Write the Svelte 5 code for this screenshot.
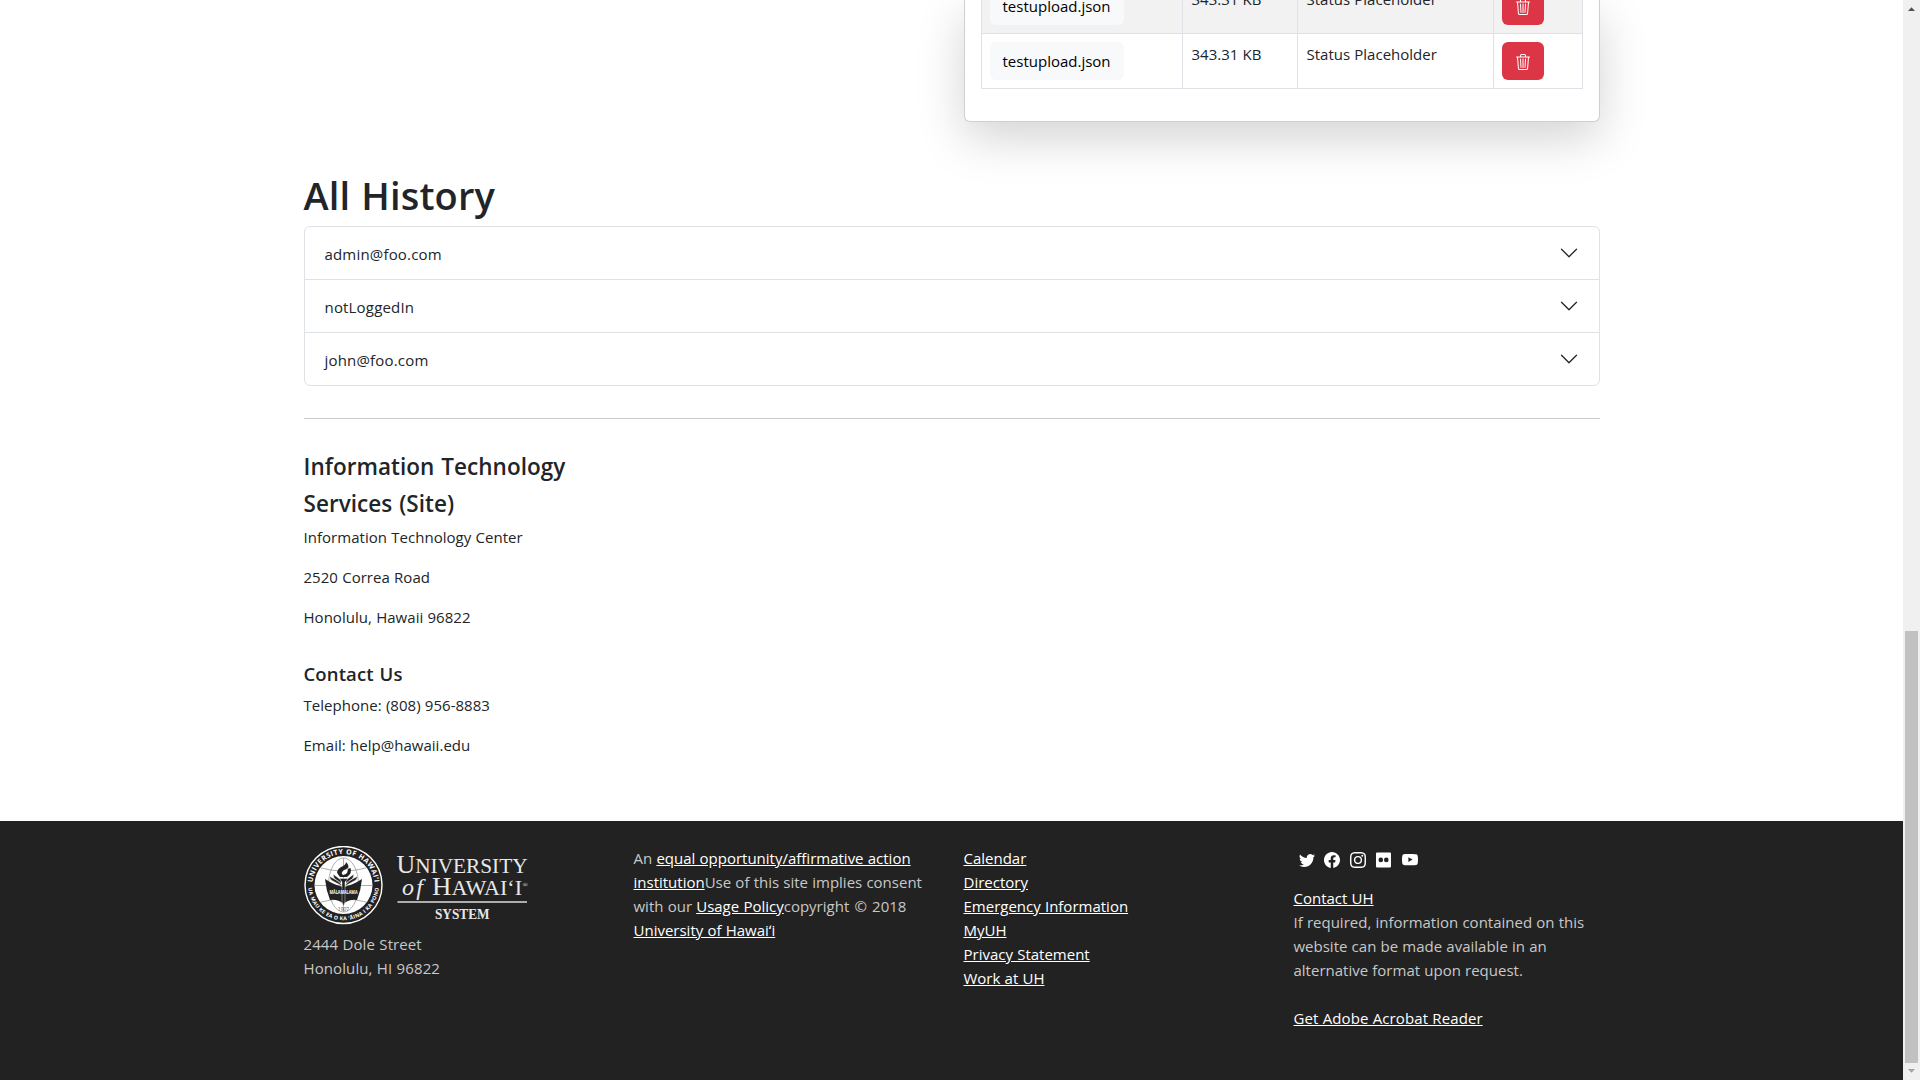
<script>
  const files = [
    { name: 'testupload.json', size: '343.31 KB', status: 'Status Placeholder' },
    { name: 'testupload.json', size: '343.31 KB', status: 'Status Placeholder' },
  ];
  const history = ['admin@foo.com', 'notLoggedIn', 'john@foo.com'];
  const links = ['Calendar', 'Directory', 'Emergency Information', 'MyUH', 'Privacy Statement', 'Work at UH'];
  const social = [
    { name: 'Twitter', d: 'M5.026 15c6.038 0 9.341-5.003 9.341-9.334 0-.14 0-.282-.006-.422A6.685 6.685 0 0 0 16 3.542a6.658 6.658 0 0 1-1.889.518 3.301 3.301 0 0 0 1.447-1.817 6.533 6.533 0 0 1-2.087.793A3.286 3.286 0 0 0 7.875 6.03a9.325 9.325 0 0 1-6.767-3.429 3.289 3.289 0 0 0 1.018 4.382A3.323 3.323 0 0 1 .64 6.575v.045a3.288 3.288 0 0 0 2.632 3.218 3.203 3.203 0 0 1-.865.115 3.23 3.23 0 0 1-.614-.057 3.283 3.283 0 0 0 3.067 2.277A6.588 6.588 0 0 1 .78 13.58a6.32 6.32 0 0 1-.78-.045A9.344 9.344 0 0 0 5.026 15z' },
    { name: 'Facebook', d: 'M16 8.049c0-4.446-3.582-8.05-8-8.05C3.58 0-.002 3.603-.002 8.05c0 4.017 2.926 7.347 6.75 7.951v-5.625h-2.03V8.05H6.75V6.275c0-2.017 1.195-3.131 3.022-3.131.876 0 1.791.157 1.791.157v1.98h-1.009c-.993 0-1.303.621-1.303 1.258v1.51h2.218l-.354 2.326H9.25V16c3.824-.604 6.75-3.934 6.75-7.951z' },
    { name: 'Instagram', d: 'M8 0C5.829 0 5.556.01 4.703.048 3.85.088 3.269.222 2.76.42a3.917 3.917 0 0 0-1.417.923A3.927 3.927 0 0 0 .42 2.76C.222 3.268.087 3.85.048 4.7.01 5.555 0 5.827 0 8.001c0 2.172.01 2.444.048 3.297.04.852.174 1.433.372 1.942.205.526.478.972.923 1.417.444.445.89.719 1.416.923.51.198 1.09.333 1.942.372C5.555 15.99 5.827 16 8 16s2.444-.01 3.298-.048c.851-.04 1.434-.174 1.943-.372a3.916 3.916 0 0 0 1.416-.923c.445-.445.718-.891.923-1.417.197-.509.332-1.09.372-1.942C15.99 10.445 16 10.173 16 8s-.01-2.445-.048-3.299c-.04-.851-.175-1.433-.372-1.941a3.926 3.926 0 0 0-.923-1.417A3.911 3.911 0 0 0 13.24.42c-.51-.198-1.092-.333-1.943-.372C10.443.01 10.172 0 7.998 0h.003zm-.717 1.442h.718c2.136 0 2.389.007 3.232.046.78.035 1.204.166 1.486.275.373.145.64.319.92.599.28.28.453.546.598.92.11.281.24.705.275 1.485.039.843.047 1.096.047 3.231s-.008 2.389-.047 3.232c-.035.78-.166 1.203-.275 1.485a2.47 2.47 0 0 1-.599.919c-.28.28-.546.453-.92.598-.28.11-.704.24-1.485.276-.843.038-1.096.047-3.232.047s-2.39-.009-3.233-.047c-.78-.036-1.203-.166-1.485-.276a2.478 2.478 0 0 1-.92-.598 2.48 2.48 0 0 1-.6-.92c-.109-.281-.24-.705-.275-1.485-.038-.843-.046-1.096-.046-3.233 0-2.136.008-2.388.046-3.231.036-.78.166-1.204.276-1.486.145-.373.319-.64.599-.92.28-.28.546-.453.92-.598.282-.11.705-.24 1.485-.276.738-.034 1.024-.044 2.515-.045v.002zm4.988 1.328a.96.96 0 1 0 0 1.92.96.96 0 0 0 0-1.92zm-4.27 1.122a4.109 4.109 0 1 0 0 8.217 4.109 4.109 0 0 0 0-8.217zm0 1.441a2.667 2.667 0 1 1 0 5.334 2.667 2.667 0 0 1 0-5.334' },
    { name: 'Flickr', d: 'M1 .5h13a1 1 0 0 1 1 1v13a1 1 0 0 1-1 1h-13a1 1 0 0 1-1-1v-13a1 1 0 0 1 1-1zM4.800 5.600a2.300 2.300 0 1 0 0 4.600 2.300 2.300 0 0 0 0-4.600zm5.500 0a2.300 2.300 0 1 0 0 4.600 2.300 2.300 0 0 0 0-4.600z' },
    { name: 'YouTube', d: 'M8.051 1.999h.089c.822.003 4.987.033 6.11.335a2.01 2.01 0 0 1 1.415 1.42c.101.38.172.883.22 1.402l.01.104.022.26.008.104c.065.914.073 1.77.074 1.957v.075c-.001.194-.01 1.108-.082 2.06l-.008.105-.009.104c-.05.572-.124 1.14-.235 1.558a2.007 2.007 0 0 1-1.415 1.42c-1.16.312-5.569.334-6.18.335h-.142c-.309 0-1.587-.006-2.927-.052l-.17-.006-.087-.004-.171-.007-.171-.007c-1.11-.049-2.167-.128-2.654-.26a2.007 2.007 0 0 1-1.415-1.419c-.111-.417-.185-.986-.235-1.558L.09 9.82l-.008-.104A31.4 31.4 0 0 1 0 7.68v-.123c.002-.215.01-.958.064-1.778l.007-.103.003-.052.008-.104.022-.26.01-.104c.048-.519.119-1.023.22-1.402a2.007 2.007 0 0 1 1.415-1.42c.487-.13 1.544-.21 2.654-.26l.17-.007.172-.006.086-.003.171-.007A99.788 99.788 0 0 1 7.858 2h.193zM6.4 5.209v4.818l4.157-2.408z' },
  ];
</script>

<div class="screen">
  <div class="page">
    <div class="container">
      <section class="upload">
        <table>
          <tbody>
            {#each files as file, i}
              <tr class:striped={i === 0}>
                <td class="c1"><span class="chip">{file.name}</span></td>
                <td class="c2">{file.size}</td>
                <td class="c3">{file.status}</td>
                <td>
                  <button class="delete" aria-label="Delete">
                    <svg viewBox="0 0 16 16"><path d="M6.5 1h3a.5.5 0 0 1 .5.5v1H6v-1a.5.5 0 0 1 .5-.5M11 2.5v-1A1.5 1.5 0 0 0 9.5 0h-3A1.5 1.5 0 0 0 5 1.5v1H1.5a.5.5 0 0 0 0 1h.538l.853 10.66A2 2 0 0 0 4.885 16h6.23a2 2 0 0 0 1.994-1.84l.853-10.66h.538a.5.5 0 0 0 0-1zm1.958 1-.846 10.58a1 1 0 0 1-.997.92h-6.23a1 1 0 0 1-.997-.92L3.042 3.5zm-7.487 1a.5.5 0 0 1 .528.47l.5 8.5a.5.5 0 0 1-.998.06L5 5.03a.5.5 0 0 1 .47-.53Zm5.058 0a.5.5 0 0 1 .47.53l-.5 8.5a.5.5 0 1 1-.998-.06l.5-8.5a.5.5 0 0 1 .528-.47M8 4.5a.5.5 0 0 1 .5.5v8.5a.5.5 0 0 1-1 0V5a.5.5 0 0 1 .5-.5" /></svg>
                  </button>
                </td>
              </tr>
            {/each}
          </tbody>
        </table>
      </section>

      <h1>All History</h1>
      <div class="accordion">
        {#each history as user}
          <div class="item">
            <span>{user}</span>
            <svg viewBox="0 0 16 16"><path d="M1.646 4.646a.5.5 0 0 1 .708 0L8 10.293l5.646-5.647a.5.5 0 0 1 .708.708l-6 6a.5.5 0 0 1-.708 0l-6-6a.5.5 0 0 1 0-.708z" /></svg>
          </div>
        {/each}
      </div>
      <hr />

      <section class="contact">
        <h2>Information Technology Services (Site)</h2>
        <p>Information Technology Center</p>
        <p>2520 Correa Road</p>
        <p>Honolulu, Hawaii 96822</p>
        <h3>Contact Us</h3>
        <p>Telephone: (808) 956-8883</p>
        <p>Email: help@hawaii.edu</p>
      </section>
    </div>

    <footer>
      <div class="columns">
        <div>
          <svg class="logo" viewBox="0 0 226 80">
            <defs>
              <path id="arc-top" d="M8.500 39a31 31 0 0 1 62 0" />
              <path id="arc-bottom" d="M4.200 39a35.300 35.300 0 0 0 70.600 0" />
            </defs>
            <circle cx="39.500" cy="39" r="38.500" fill="#222" stroke="#fff" stroke-width="1.400" />
            <circle cx="39.500" cy="39" r="29" fill="#fff" />
            <g fill="none" stroke="#999" stroke-width=".8">
              <ellipse cx="39.500" cy="39" rx="15" ry="27" />
              <path d="M39.500 12v54M11 39.500h57M17 22q22.500 6 45 0M17 56q22.500-6 45 0" />
            </g>
            <path d="M21 33q9 6 18.500 8 9.500-2 18.500-8-1 11-5 21-8-1-13.500 4-5.500-5-13.500-4-4-10-5-21z" fill="#222" />
            <path d="M27 34l-2-4 11 6 2 4zM52 34l2-4-11 6-2 4zM30 32l-1-4 8 6v4zM49 32l1-4-8 6v4z" fill="#222" stroke="#fff" stroke-width=".5" />
            <path d="M35.500 32.500h8.500l-3 3.500v19l-1.500 6-1.500-6V36z" fill="#222" stroke="#fff" stroke-width=".4" />
            <path d="M36 31q-6-6 1-10 5-2 5-5 4 4 1.500 7l3-1q2 5-3.500 9z" fill="#222" />
            <path d="M39 29q-3-2 1-5 4-1 3-3 2 4-1 7z" fill="#fff" />
            <text class="motto" x="39.500" y="48" textLength="28" lengthAdjust="spacingAndGlyphs">MĀLAMALAMA</text>
            <text class="year" x="39.500" y="65">1907</text>
            <text class="ring"><textPath href="#arc-top" startOffset="50%" textLength="92">UNIVERSITY OF HAWAI‘I</textPath></text>
            <text class="ring small"><textPath href="#arc-bottom" startOffset="50%" textLength="105">UA MAU KE EA O KA ‘ĀINA I KA PONO</textPath></text>
            <g class="wordmark">
              <text x="92.500" y="27" textLength="131" lengthAdjust="spacingAndGlyphs"><tspan class="cap">U</tspan>NIVERSITY</text>
              <text x="98" y="48.800" class="italic" textLength="21">of</text>
              <text x="128" y="48.800" textLength="90" lengthAdjust="spacingAndGlyphs"><tspan class="cap">H</tspan>AWAI‘I</text>
              <text x="218.500" y="41" class="mark">®</text>
              <path d="M93.500 56h129.500" stroke="#ddd" stroke-width="1.500" />
              <text x="131" y="72.500" class="system" textLength="54.500" lengthAdjust="spacingAndGlyphs">SYSTEM</text>
            </g>
          </svg>
          <div class="address">2444 Dole Street<br />Honolulu, HI 96822</div>
        </div>
        <div class="legal">
          <div>An <a href="#eeo">equal opportunity/affirmative action</a></div>
          <div><a href="#eeo">institution</a>Use of this site implies consent</div>
          <div>with our <a href="#usage">Usage Policy</a>copyright <span class="copy">©</span> 2018</div>
          <div><a href="#uh">University of Hawaiʻi</a></div>
        </div>
        <div>
          {#each links as link}
            <div><a href="#link">{link}</a></div>
          {/each}
        </div>
        <div>
          <div class="social">
            {#each social as icon}
              <svg viewBox="0 0 16 16" role="img" aria-label={icon.name}><path fill-rule="evenodd" d={icon.d} /></svg>
            {/each}
          </div>
          <div><a href="#contact">Contact UH</a></div>
          <div>If required, information contained on this</div>
          <div>website can be made available in an</div>
          <div>alternative format upon request.</div>
          <div class="reader"><a href="#reader">Get Adobe Acrobat Reader</a></div>
        </div>
      </div>
    </footer>
  </div>

  <div class="scrollbar">
    <svg viewBox="0 0 17 17"><path d="M5 11h7L8.500 7.200z" fill="#505050" /></svg>
    <div class="thumb"></div>
    <svg viewBox="0 0 17 17"><path d="M5 6h7L8.500 9.800z" fill="#a3a3a3" /></svg>
  </div>
</div>

<style>
  :global(body) { margin: 0; overflow: hidden; }
  * { box-sizing: border-box; }
  .screen {
    display: flex;
    width: 1920px;
    height: 1080px;
    overflow: hidden;
    background: #fff;
    color: #212529;
    font: 400 15px/24px 'Open Sans', 'Noto Sans', sans-serif;
    word-spacing: .3px;
  }
  .page { display: flex; flex-direction: column; width: 1903px; }
  .container { flex: none; width: 1296px; height: 821px; margin: 0 auto; }

  .upload {
    width: 636px;
    height: 122px;
    margin-left: auto;
    padding: 0 16px 32px;
    display: flex;
    align-items: flex-end;
    border: 1px solid #cfcfcf;
    border-top: 0;
    border-radius: 0 0 6px 6px;
    background: #fff;
    box-shadow: 0 16px 48px rgba(0, 0, 0, .176);
  }
  table { width: 602px; border-collapse: collapse; table-layout: fixed; }
  tr { height: 55px; }
  td { padding: 8px; vertical-align: top; border: 1px solid #dee2e6; }
  .striped { background: #f2f2f2; }
  .c1 { width: 201px; }
  .c2 { width: 115px; padding-left: 9px; }
  .c3 { width: 196px; padding-left: 9px; }
  .chip {
    display: inline-block;
    height: 38px;
    padding: 7px 13px;
    border-radius: 6px;
    background: #f8f9fa;
    color: #000;
  }
  .delete {
    display: flex;
    align-items: center;
    justify-content: center;
    width: 42px;
    height: 38px;
    padding: 2px 0 0;
    border: 0;
    border-radius: 6px;
    background: #dc3545;
  }
  .delete svg { width: 16px; height: 16px; fill: #fff; }

  h1 { margin: 49px 0 7px; font-size: 38px; line-height: 48px; font-weight: 600; letter-spacing: .15px; word-spacing: 1px; }
  .accordion { border: 1px solid #dee2e6; border-radius: 6px; letter-spacing: .18px; }
  .item { display: flex; align-items: center; justify-content: space-between; height: 53px; padding: 1px 20px 0; }
  .item:first-child { height: 52px; }
  .item + .item { border-top: 1px solid #dee2e6; }
  .item svg { width: 20px; height: 20px; margin-top: -2px; fill: #212529; }
  hr { height: 1px; margin: 32px 0 29px; border: 0; background: #c8c9ca; }

  h2 { width: 306px; margin: 0 0 3px; font-size: 22.500px; line-height: 37px; font-weight: 600; letter-spacing: .04px; word-spacing: 1px; }
  h3 { margin: 32px 0 6px; font-size: 18.500px; line-height: 26px; font-weight: 600; letter-spacing: .12px; word-spacing: 1px; }
  p { margin: 0 0 16px; letter-spacing: .03px; }

  footer { flex: 1; padding-top: 25px; background: #222; color: #c8c8c8; }
  .columns { display: grid; grid-template-columns: repeat(4, 306px); gap: 24px; width: 1296px; margin: 0 auto; white-space: nowrap; }
  a { color: #fff; text-underline-offset: 1px; }
  .logo { display: block; width: 226px; height: 80px; }
  .address { margin-top: 6px; letter-spacing: .1px; }
  .copy { margin: 0 1px; }
  .ring { fill: #fff; font: 700 7px 'Open Sans', sans-serif; text-anchor: middle; word-spacing: 0; }
  .small { font-size: 5.200px; }
  .motto { fill: #fff; font: 700 4.600px 'Open Sans', sans-serif; text-anchor: middle; }
  .year { fill: #555; font: 5px 'Open Sans', sans-serif; text-anchor: middle; }
  .wordmark { fill: #e8e8e8; font: 20.500px 'Liberation Serif', serif; }
  .cap { font-size: 25px; }
  .italic { font-size: 24px; font-style: italic; }
  .mark { font-size: 7px; }
  .system { font-size: 14.500px; font-weight: 700; }
  .social { display: flex; gap: 9.900px; padding: 6px 0 0 5px; margin-bottom: 18px; }
  .social svg { width: 16px; height: 16px; fill: #fff; }
  .reader { margin-top: 24px; letter-spacing: .09px; }

  .scrollbar { display: flex; flex-direction: column; justify-content: space-between; width: 17px; background: #f0f0f0; }
  .scrollbar svg { width: 17px; height: 17px; }
  .thumb { width: 13px; height: 432px; margin: auto auto 0; background: #c1c1c1; }
</style>
